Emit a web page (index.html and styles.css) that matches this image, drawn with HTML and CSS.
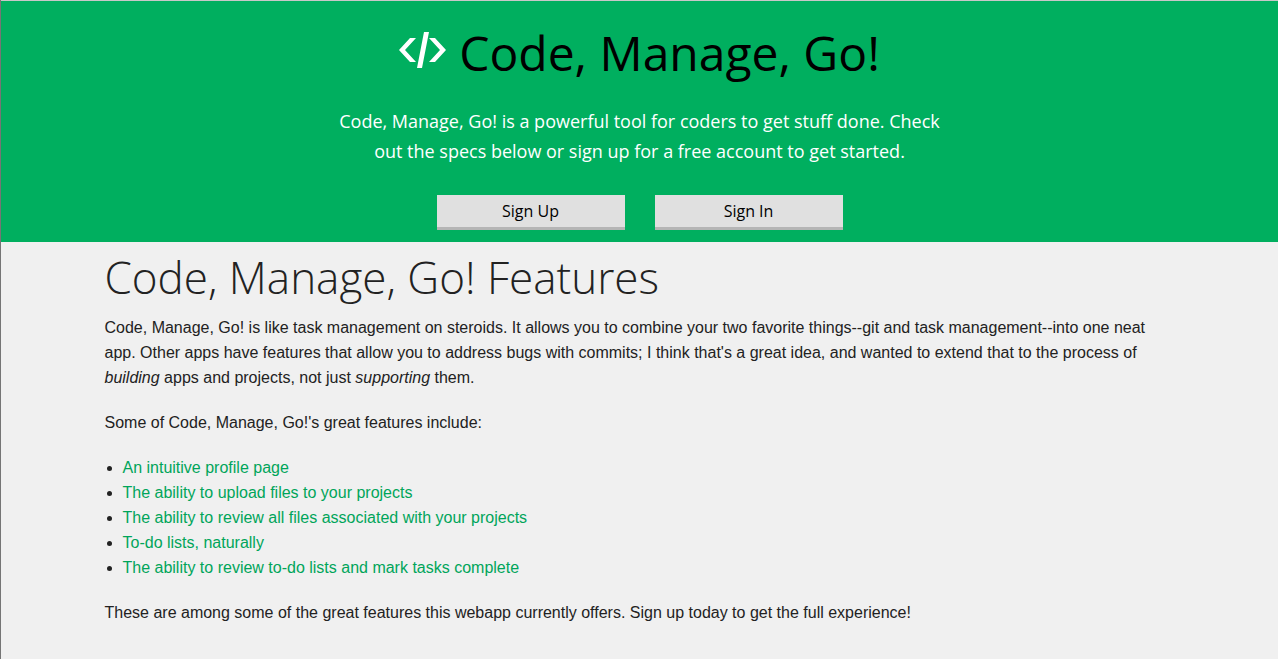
FILE: index.html
```html
<!DOCTYPE html>
<html lang="en">
<head>
<meta charset="utf-8">
<title>Code, Manage, Go!</title>
<link rel="stylesheet" href="styles.css">
</head>
<body>
<header class="hero">
  <div class="brand">
    <svg class="logo" viewBox="0 0 47 36" aria-hidden="true">
      <path d="M0 18 L11 6 H17 L6 18 L17 30 H11 Z M25 0 H30 L23 36 H18 Z M30 6 H36 L47 18 L36 30 H30 L41 18 Z" fill="#fff"/>
    </svg>
    <h1 class="title">Code, Manage, Go!</h1>
  </div>
  <p class="tagline">Code, Manage, Go! is a powerful tool for coders to get stuff done. Check out the specs below or sign up for a free account to get started.</p>
  <nav class="actions">
    <a class="btn" href="#signup">Sign Up</a>
    <a class="btn" href="#signin">Sign In</a>
  </nav>
</header>
<main class="content">
  <h2 class="heading">Code, Manage, Go! Features</h2>
  <p class="text">Code, Manage, Go! is like task management on steroids. It allows you to combine your two favorite things--git and task management--into one neat app. Other apps have features that allow you to address bugs with commits; I think that's a great idea, and wanted to extend that to the process of <em>building</em> apps and projects, not just <em>supporting</em> them.</p>
  <p class="text">Some of Code, Manage, Go!'s great features include:</p>
  <ul class="features">
    <li><a href="#profile">An intuitive profile page</a></li>
    <li><a href="#upload">The ability to upload files to your projects</a></li>
    <li><a href="#files">The ability to review all files associated with your projects</a></li>
    <li><a href="#todo">To-do lists, naturally</a></li>
    <li><a href="#tasks">The ability to review to-do lists and mark tasks complete</a></li>
  </ul>
  <p class="text">These are among some of the great features this webapp currently offers. Sign up today to get the full experience!</p>
</main>
</body>
</html>
```
FILE: styles.css
```css
* { box-sizing: border-box; }
body {
  margin: 0;
  min-height: 100vh;
  background: #f0f0f0;
  border-left: 1px solid #757575;
  color: #222;
  font: 16px/25px "Liberation Sans", Arial, sans-serif;
}
.hero {
  display: flex;
  flex-direction: column;
  align-items: center;
  padding: 20px 20px 12px;
  background: #00af5f;
  border-top: 1px solid #c8c8c8;
  font-family: "Open Sans", sans-serif;
}
.brand { display: flex; align-items: center; gap: 13px; }
.logo { width: 47px; height: 36px; margin-bottom: 6px; }
.title { margin: 0; color: #000; font-size: 48px; font-weight: 400; line-height: 64px; }
.tagline {
  max-width: 620px;
  margin: 21px 0 29px;
  color: #fff;
  font-size: 18px;
  font-weight: 400;
  line-height: 30px;
  text-align: center;
}
.actions { display: flex; gap: 30px; }
.btn {
  width: 188px;
  background: #e0e0e0;
  border-bottom: 3px solid #b5b5b5;
  color: #000;
  font-size: 16px;
  line-height: 32px;
  text-align: center;
  text-decoration: none;
}
.content { max-width: 1070px; margin: 0 auto; }
.heading {
  margin: 3px 0 6px;
  font: 300 44px/64px "Open Sans", sans-serif;
}
.text { margin: 0 0 20px; }
.features { margin: 0 0 20px; padding-left: 18px; }
.features a { color: #00a55a; text-decoration: none; }
```
